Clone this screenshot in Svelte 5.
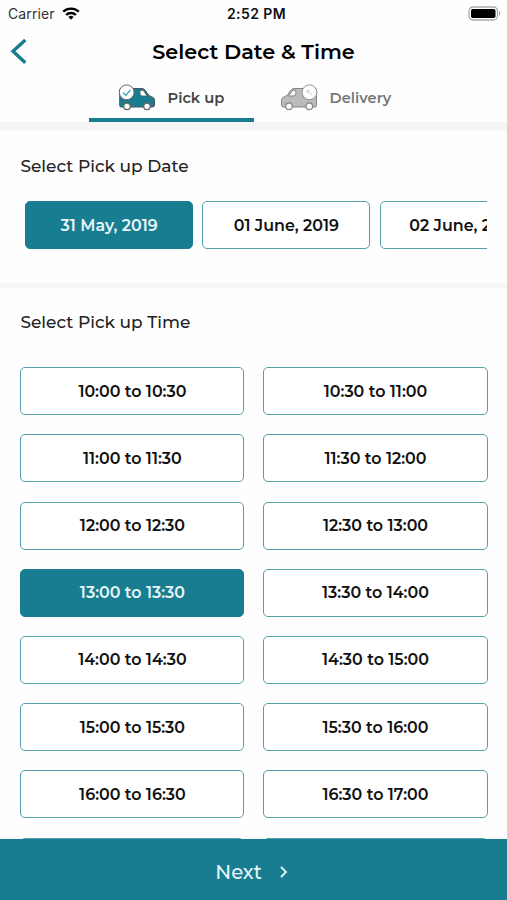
<script lang="ts">
  type Tab = 'pickup' | 'delivery';

  const dates = ['31 May, 2019', '01 June, 2019', '02 June, 2019'];
  const slots = [
    '10:00 to 10:30', '10:30 to 11:00',
    '11:00 to 11:30', '11:30 to 12:00',
    '12:00 to 12:30', '12:30 to 13:00',
    '13:00 to 13:30', '13:30 to 14:00',
    '14:00 to 14:30', '14:30 to 15:00',
    '15:00 to 15:30', '15:30 to 16:00',
    '16:00 to 16:30', '16:30 to 17:00',
    '17:00 to 17:30', '17:30 to 18:00',
  ];

  let tab: Tab = 'pickup';
  let selectedDate = dates[0];
  let selectedSlot = '13:00 to 13:30';
</script>

<div class="screen">
  <div class="status-bar">
    <div class="carrier">
      <span>Carrier</span>
      <svg width="18" height="14" viewBox="0 0 18 14" fill="none" stroke="#000" stroke-width="2.3">
        <path d="M1.2 4.700a11.2 11.2 0 0 1 15.6 0"></path>
        <path d="M4.1 8a7 7 0 0 1 9.8 0"></path>
        <path d="M9 12.700l-2.6-2.7a3.8 3.8 0 0 1 5.2 0z" fill="#000" stroke="none"></path>
      </svg>
    </div>
    <span class="clock">2:52 PM</span>
    <svg class="battery" width="33" height="16" viewBox="0 0 33 16">
      <rect x="1" y="1" width="28.5" height="13" rx="4" fill="#fff" stroke="#aaa" stroke-width="1.3"></rect>
      <rect x="3" y="3" width="24.5" height="9" rx="1.8" fill="#000"></rect>
      <path d="M31 5.3c1.5.6 1.5 3.8 0 4.4z" fill="#999"></path>
    </svg>
  </div>

  <header>
    <button class="back" aria-label="Back">
      <svg width="18" height="26" viewBox="0 0 18 26" fill="none" stroke="#187d90" stroke-width="3.4">
        <path d="M15.3 1L3 12.3l12.3 11.5"></path>
      </svg>
    </button>
    <h1>Select Date &amp; Time</h1>
  </header>

  <nav>
    <button class="tab" class:active={tab === 'pickup'} on:click={() => (tab = 'pickup')}>
      <svg width="38" height="28" viewBox="0 0 38 28">
        <path d="M1.700 6q0-1.500 1.500-1.500H24q1.800 0 3 1.600l4 5.400 4 2q1.500.8 1.500 2.500v5q0 2-2 2H3.200q-1.500 0-1.500-1.500z" fill="#187d90" stroke="#4c555c" stroke-width="1"></path>
        <path d="M22 6.300h3.200l4 5.700h-4.700q-2.500 0-2.500-2.500z" fill="#fff" stroke="#4c555c" stroke-width=".8"></path>
        <circle cx="9" cy="22.300" r="3.300" fill="#fff" stroke="#666" stroke-width="1.300"></circle>
        <circle cx="29" cy="22.300" r="3.300" fill="#fff" stroke="#666" stroke-width="1.300"></circle>
        <circle cx="8.700" cy="8.300" r="7.400" fill="#fff" stroke="#666" stroke-width="1"></circle>
        <path d="M5 8.700l2.700 2.700 4.800-5.200" fill="none" stroke="#2499b2" stroke-width="1.200"></path>
      </svg>
      <span>Pick up</span>
    </button>
    <button class="tab" class:active={tab === 'delivery'} on:click={() => (tab = 'delivery')}>
      <svg width="38" height="28" viewBox="0 0 38 28">
        <path d="M36.500 6q0-1.500-1.500-1.500H14q-1.800 0-3 1.600l-4 5.400-4 2q-1.500.8-1.500 2.500v5q0 2 2 2H35q1.500 0 1.500-1.500z" fill="#bbb" stroke="#858585" stroke-width="1"></path>
        <path d="M15.800 6.300h-3.200l-4 5.700h4.700q2.500 0 2.500-2.500z" fill="#fff" stroke="#858585" stroke-width="1"></path>
        <circle cx="9" cy="22.300" r="3.300" fill="#fff" stroke="#8c8c8c" stroke-width="1.300"></circle>
        <circle cx="29.300" cy="22.300" r="3.300" fill="#fff" stroke="#8c8c8c" stroke-width="1.300"></circle>
        <circle cx="29.500" cy="8.300" r="7.400" fill="#fff" stroke="#8c8c8c" stroke-width="1"></circle>
        <path d="M32 11l-4.500-4M27.200 9V6.500h2.500" fill="none" stroke="#bbb" stroke-width=".8"></path>
      </svg>
      <span>Delivery</span>
    </button>
  </nav>

  <section class="date-section">
    <h2>Select Pick up Date</h2>
    <div class="dates">
      {#each dates as date}
        <button class="option" class:selected={date === selectedDate} on:click={() => (selectedDate = date)}>
          {date}
        </button>
      {/each}
    </div>
  </section>

  <section class="time-section">
    <h2>Select Pick up Time</h2>
    <div class="slots">
      {#each slots as slot}
        <button class="option" class:selected={slot === selectedSlot} on:click={() => (selectedSlot = slot)}>
          {slot}
        </button>
      {/each}
    </div>
  </section>

  <button class="next">
    <span>Next</span>
    <svg width="10" height="14" viewBox="0 0 10 14" fill="none" stroke="#e6f5f8" stroke-width="1.8">
      <path d="M2 2l5 5-5 5"></path>
    </svg>
  </button>
</div>

<style>
  :global(body) {
    background: #fff;
  }

  .screen {
    height: 900px;
    display: flex;
    flex-direction: column;
    overflow: hidden;
    background: #fefefe;
    color: #111;
    font-family: Montserrat, Inter, sans-serif;
  }

  button {
    margin: 0;
    padding: 0;
    border: none;
    background: none;
    color: inherit;
    font-family: inherit;
    cursor: pointer;
  }

  svg {
    flex: none;
    display: block;
  }

  .status-bar {
    flex: none;
    height: 27px;
    padding: 0 6px 0 8px;
    display: grid;
    grid-template-columns: 1fr auto 1fr;
    align-items: center;
    font-family: Inter, sans-serif;
    font-size: 14px;
  }

  .carrier {
    display: flex;
    align-items: center;
    gap: 7px;
    color: #333;
    letter-spacing: 0.1px;
  }

  .clock {
    padding-left: 4px;
    font-weight: 600;
    letter-spacing: 0.4px;
  }

  .battery {
    justify-self: end;
  }

  header {
    flex: none;
    height: 49px;
    padding: 0 10px;
    display: grid;
    grid-template-columns: 18px 1fr 18px;
    align-items: center;
  }

  h1 {
    margin: 0;
    text-align: center;
    font-size: 20.8px;
    font-weight: 600;
    color: #000;
  }

  nav {
    flex: none;
    height: 46px;
    display: grid;
    grid-template-columns: 165px 165px;
    justify-content: center;
    border-bottom: 9px solid #f5f5f5;
  }

  .tab {
    display: flex;
    align-items: center;
    gap: 12px;
    padding: 2px 0 0 26px;
    border-bottom: 4px solid transparent;
    font-size: 14.7px;
    font-weight: 600;
    color: #777;
  }

  .tab.active {
    padding-left: 29px;
    border-color: #187d90;
    color: #444;
  }

  h2 {
    margin: 0;
    font-size: 17px;
    line-height: 22px;
    font-weight: 500;
    color: #222;
  }

  .date-section {
    flex: none;
    height: 152px;
    padding: 24px 20px 0 20.4px;
    box-sizing: border-box;
  }

  .dates {
    display: flex;
    gap: 9.2px;
    margin-top: 24px;
    padding-left: 4.8px;
    overflow: hidden;
  }

  .dates .option {
    flex: 0 0 168px;
  }

  .option {
    height: 48px;
    box-sizing: border-box;
    border: 1.5px solid #549fac;
    border-radius: 5px;
    background: #fff;
    font-size: 15.9px;
    font-weight: 600;
  }

  .option.selected {
    border-color: #187d90;
    background: #187d90;
    color: #e6f5f8;
  }

  .time-section {
    flex: 1;
    min-height: 0;
    padding: 23px 19.5px 0 20.4px;
    border-top: 5px solid #f7f7f7;
    overflow: hidden;
  }

  .slots {
    display: grid;
    grid-template-columns: 1fr 1fr;
    gap: 19.2px 19px;
    margin-top: 34.2px;
  }

  .next {
    flex: none;
    height: 61px;
    padding: 5px 3px 0 0;
    display: flex;
    align-items: center;
    justify-content: center;
    gap: 17px;
    background: #187d90;
    color: #e6f5f8;
    font-size: 19.6px;
    font-weight: 500;
  }
</style>
